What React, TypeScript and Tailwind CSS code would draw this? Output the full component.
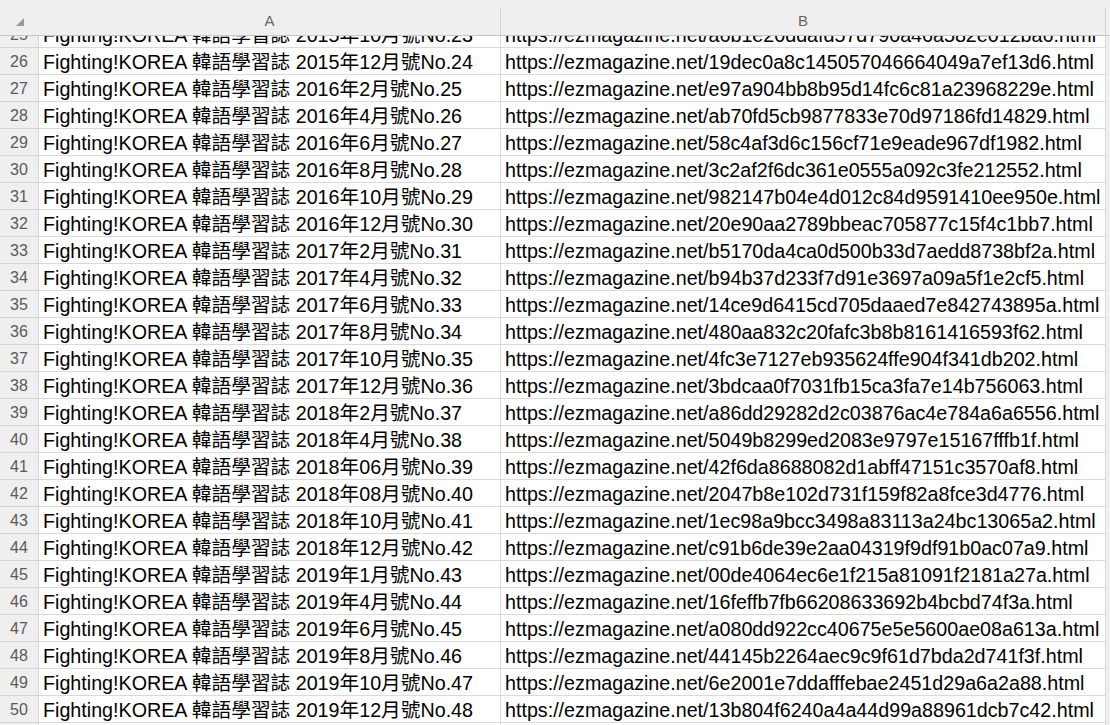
const rows: [number, string, string][] = [
  [25, '2015年10月號No.23', 'a6b1e20ddafd57d790a46a582e012ba6'],
  [26, '2015年12月號No.24', '19dec0a8c145057046664049a7ef13d6'],
  [27, '2016年2月號No.25', 'e97a904bb8b95d14fc6c81a23968229e'],
  [28, '2016年4月號No.26', 'ab70fd5cb9877833e70d97186fd14829'],
  [29, '2016年6月號No.27', '58c4af3d6c156cf71e9eade967df1982'],
  [30, '2016年8月號No.28', '3c2af2f6dc361e0555a092c3fe212552'],
  [31, '2016年10月號No.29', '982147b04e4d012c84d9591410ee950e'],
  [32, '2016年12月號No.30', '20e90aa2789bbeac705877c15f4c1bb7'],
  [33, '2017年2月號No.31', 'b5170da4ca0d500b33d7aedd8738bf2a'],
  [34, '2017年4月號No.32', 'b94b37d233f7d91e3697a09a5f1e2cf5'],
  [35, '2017年6月號No.33', '14ce9d6415cd705daaed7e842743895a'],
  [36, '2017年8月號No.34', '480aa832c20fafc3b8b8161416593f62'],
  [37, '2017年10月號No.35', '4fc3e7127eb935624ffe904f341db202'],
  [38, '2017年12月號No.36', '3bdcaa0f7031fb15ca3fa7e14b756063'],
  [39, '2018年2月號No.37', 'a86dd29282d2c03876ac4e784a6a6556'],
  [40, '2018年4月號No.38', '5049b8299ed2083e9797e15167fffb1f'],
  [41, '2018年06月號No.39', '42f6da8688082d1abff47151c3570af8'],
  [42, '2018年08月號No.40', '2047b8e102d731f159f82a8fce3d4776'],
  [43, '2018年10月號No.41', '1ec98a9bcc3498a83113a24bc13065a2'],
  [44, '2018年12月號No.42', 'c91b6de39e2aa04319f9df91b0ac07a9'],
  [45, '2019年1月號No.43', '00de4064ec6e1f215a81091f2181a27a'],
  [46, '2019年4月號No.44', '16feffb7fb66208633692b4bcbd74f3a'],
  [47, '2019年6月號No.45', 'a080dd922cc40675e5e5600ae08a613a'],
  [48, '2019年8月號No.46', '44145b2264aec9c9f61d7bda2d741f3f'],
  [49, '2019年10月號No.47', '6e2001e7ddafffebae2451d29a6a2a88'],
  [50, '2019年12月號No.48', '13b804f6240a4a44d99a88961dcb7c42'],
  [51, '', ''],
];

export default function App() {
  return (
    <div className="w-[1110px] h-[725px] bg-[#efefef] overflow-hidden flex flex-col font-['Liberation_Sans','Noto_Sans_CJK_TC',sans-serif]">
      {/* column headers */}
      <div className="h-[36px] shrink-0 flex border-b border-[#c6c6c6] text-[#666] text-[15px]">
        <div className="w-[39px] shrink-0 flex items-end justify-end pr-[15px] pb-[9px]">
          <svg width="8" height="8" viewBox="0 0 8 8">
            <path d="M8 0 L8 8 L0 8 Z" fill="#999" />
          </svg>
        </div>
        <div className="w-[462px] shrink-0 mt-[8px] border-r border-[#d4d4d4] flex items-center justify-center">A</div>
        <div className="w-[605px] shrink-0 mt-[8px] border-r border-[#d4d4d4] flex items-center justify-center">B</div>
      </div>

      {/* cells */}
      <div className="flex-1 overflow-hidden">
        <div className="-mt-[15px]">
          {rows.map(([n, issue, hash]) => (
            <div key={n} className="flex h-[27px]">
              <div className="w-[39px] shrink-0 border-b border-r border-[#d4d4d4] text-center text-[16px] leading-[26px] pt-[1px] text-[#5a5a5a]">
                {n}
              </div>
              <div className="w-[462px] shrink-0 bg-white border-b border-r border-[#dadada] pl-[4px] text-[19.7px] leading-[26px] pt-[1px] text-black whitespace-nowrap overflow-hidden">
                {issue && `Fighting!KOREA 韓語學習誌 ${issue}`}
              </div>
              <div className="w-[605px] shrink-0 bg-white border-b border-r border-[#dadada] pl-[4px] text-[19.7px] leading-[26px] pt-[1px] text-black whitespace-nowrap overflow-hidden">
                {hash && `https://ezmagazine.net/${hash}.html`}
              </div>
            </div>
          ))}
        </div>
      </div>
    </div>
  );
}
